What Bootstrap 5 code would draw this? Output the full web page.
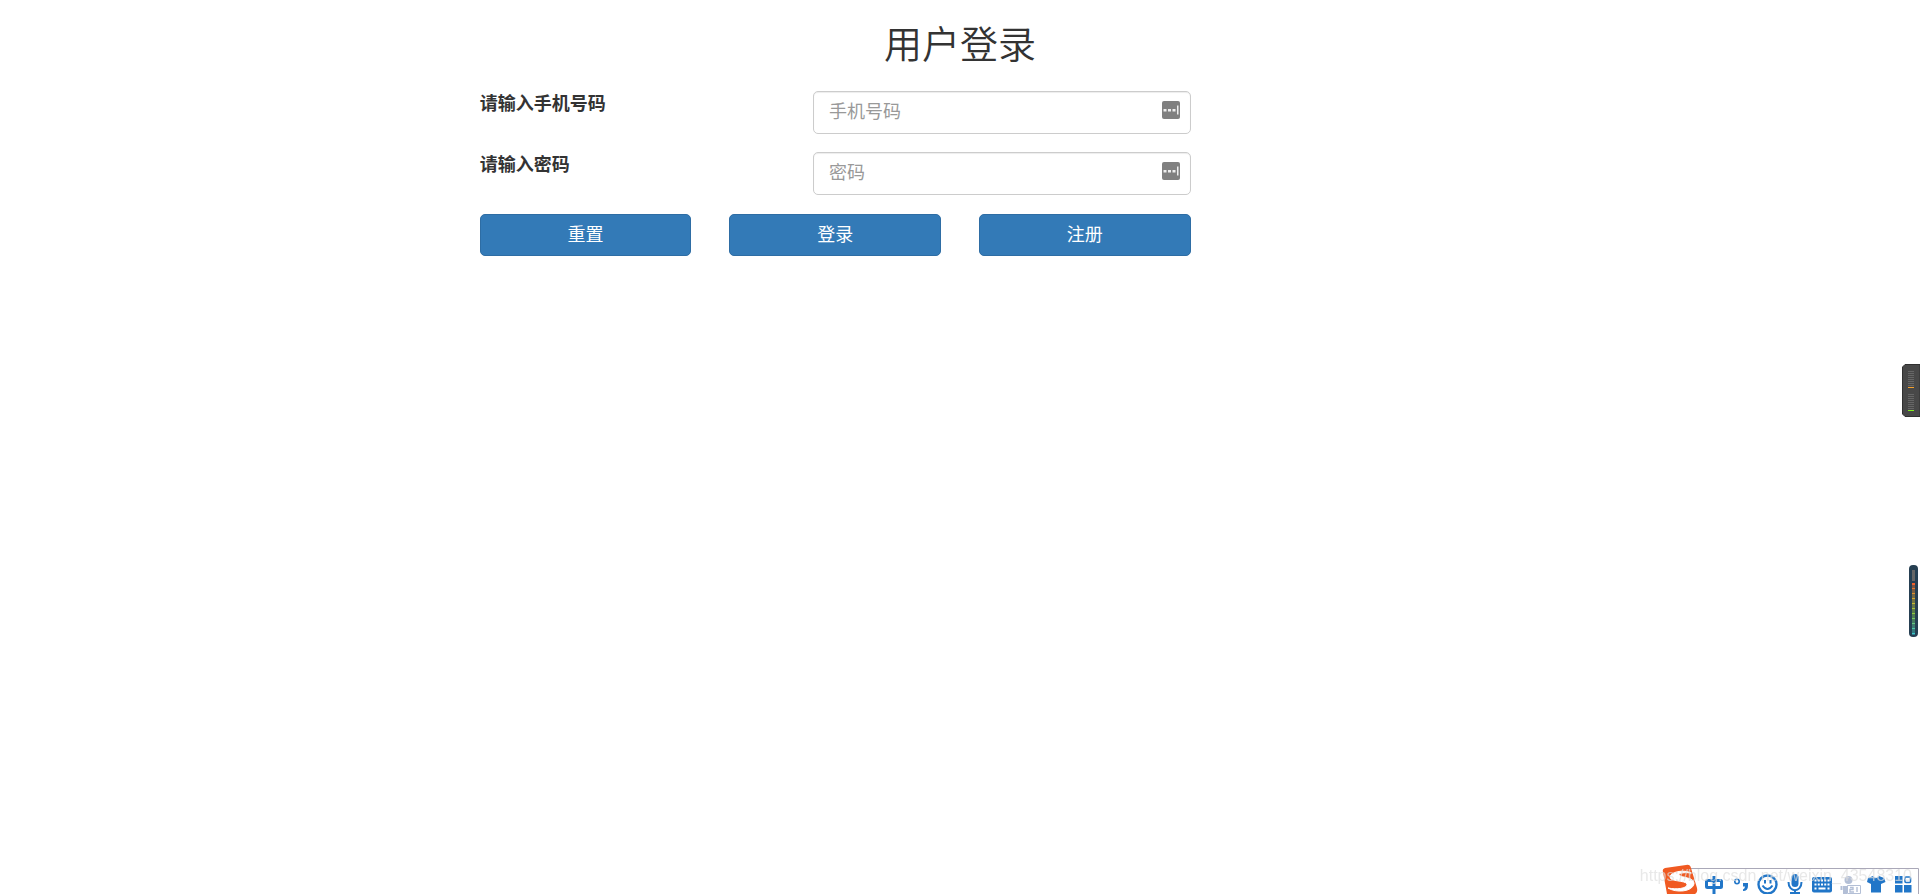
<!DOCTYPE html>
<html lang="zh-CN">
<head>
<meta charset="utf-8">
<meta name="viewport" content="width=device-width, initial-scale=1">
<title>用户登录</title>
<link href="https://cdn.jsdelivr.net/npm/bootstrap@5.3.0/dist/css/bootstrap.min.css" rel="stylesheet">
<style>
  body { font-family: "Liberation Sans", "Noto Sans CJK SC", sans-serif; font-size: 18px; line-height: 26px; color: #333; background: #fff; }
  .page-title { font-size: 38px; line-height: 42px; font-weight: 350; font-family: "Noto Sans CJK SC", sans-serif; margin: 21px 0 28px; }
  .login-form { width: 39%; margin-left: 24%; }
  .login-form .row { --bs-gutter-x: 38px; margin: 0 0 18px; }
  .label-col { width: 44.5%; }
  .field-col { width: 55.5%; }
  .form-control { height: 43px; padding: 8px 40px 8px 15px; font-size: 18px; line-height: 25px; border-color: #ccc; border-radius: 5px; box-shadow: inset 0 1px 1px rgba(0,0,0,.075); }
  .form-control::placeholder { color: #999; }
  .key-icon { top: 10px; right: 30px; }
  .login-form .button-row { padding-top: 1px; }
  .btn-primary { --bs-btn-bg: #337ab7; --bs-btn-border-color: #2e6da4; height: 42px; padding: 7px 15px; font-size: 18px; line-height: 25px; border-radius: 5px; }
  .meter-panel { top: 364px; width: 18px; height: 53px; }
  .level-bar { top: 565px; right: 2px; }
  .watermark { right: 8px; bottom: 6px; font-family: "Liberation Sans", sans-serif; font-size: 16px; line-height: 24px; color: rgba(222,222,222,.7); pointer-events: none; }
</style>
</head>
<body>
<main>
  <h1 class="page-title text-center">用户登录</h1>
  <form class="login-form">
    <div class="row">
      <div class="label-col"><label class="fw-bold" for="phone">请输入手机号码</label></div>
      <div class="field-col position-relative">
        <input class="form-control" id="phone" type="tel" placeholder="手机号码">
        <svg class="key-icon position-absolute" width="18" height="18" viewBox="0 0 18 18" aria-hidden="true"><rect width="18" height="18" rx="2" fill="#808080"/><path d="M1.500 8h3v2.500h-3zM6 8h3v2.500H6zM10.500 8h3v2.500h-3zM15 4.500h1.500v9H15z" fill="#eee"/></svg>
      </div>
    </div>
    <div class="row">
      <div class="label-col"><label class="fw-bold" for="password">请输入密码</label></div>
      <div class="field-col position-relative">
        <input class="form-control" id="password" type="password" placeholder="密码">
        <svg class="key-icon position-absolute" width="18" height="18" viewBox="0 0 18 18" aria-hidden="true"><rect width="18" height="18" rx="2" fill="#808080"/><path d="M1.500 8h3v2.500h-3zM6 8h3v2.500H6zM10.500 8h3v2.500h-3zM15 4.500h1.500v9H15z" fill="#eee"/></svg>
      </div>
    </div>
    <div class="row button-row">
      <div class="col-4"><button class="btn btn-primary w-100" type="reset">重置</button></div>
      <div class="col-4"><button class="btn btn-primary w-100" type="submit">登录</button></div>
      <div class="col-4"><button class="btn btn-primary w-100" type="button">注册</button></div>
    </div>
  </form>
</main>

<!-- desktop meters docked to the right edge -->
<svg class="meter-panel position-fixed end-0" viewBox="0 0 18 53" aria-hidden="true">
  <path d="M18 .5H3L.5 3v47L3 52.500H18z" fill="#484848" stroke="#303030"/>
  <path d="M6 7.500h6M6 9.500h6M6 11.500h6M6 13.500h6M6 15.500h6M6 17.500h6M6 19.500h6M6 21.500h6M6 30.500h6M6 32.500h6M6 34.500h6M6 36.500h6M6 38.500h6M6 40.500h6M6 42.500h6M6 44.500h6" stroke="#666"/>
  <path d="M6 23.500h6" stroke="#f5a12d"/><path d="M6 46.500h6" stroke="#83f01d"/>
</svg>
<svg class="level-bar position-fixed" width="9" height="72" viewBox="0 0 9 72" aria-hidden="true">
  <defs><linearGradient id="level" x1="0" y1="18" x2="0" y2="70" gradientUnits="userSpaceOnUse"><stop stop-color="#f45b2b"/><stop offset=".35" stop-color="#d5b62c"/><stop offset=".6" stop-color="#8ccc40"/><stop offset="1" stop-color="#35c6d4"/></linearGradient></defs>
  <rect width="9" height="72" rx="4" fill="#263f52"/>
  <rect x="3" y="5" width="3" height="11" fill="#666"/>
  <path d="M3 18h3v52H3z" fill="url(#level)" opacity=".45"/>
  <path d="M3 18h3v2H3zM3 23h3v1H3zM3 28h3v1H3zM3 33h3v1H3zM3 38h3v1H3zM3 43h3v1H3zM3 48h3v1H3zM3 53h3v1H3zM3 58h3v1H3zM3 63h3v1H3zM3 68h3v1H3z" fill="url(#level)"/>
</svg>

<!-- input method toolbar -->
<svg class="position-fixed bottom-0 end-0" width="260" height="30" viewBox="1660 864 260 30" role="img" aria-label="输入法工具栏">
  <path d="M1685 868.500H1918.500V894" fill="#fff" stroke="#aaa8b8"/>
  <path d="M1665 868L1686 865q4-1 5 3l6 20q1 4-2 6H1667l-4-22q-1-3 2-4z" fill="#f05a22"/>
  <path d="M1691 873c-7-4-21-1-21 4s15 3 17 7c1 4-9 6-19 4 8 5 24 4 26-4 1-7-13-6-15-9-1-2 7-3 12-2z" fill="#fff" stroke="#fff"/>
  <g fill="none" stroke="#2176c8" stroke-width="3">
    <rect x="1706.500" y="880.500" width="15" height="7" rx="1"/><path d="M1714 876v18"/>
    <circle cx="1737" cy="881.500" r="2.200" stroke-width="1.600"/>
    <circle cx="1767.500" cy="884.500" r="9" stroke-width="2.400"/>
    <path d="M1762.500 885.500q5 7 10 0" stroke-width="2"/>
    <path d="M1765 880v3.500M1770.500 880v3.500" stroke-width="2"/>
    <path d="M1788.500 882c0 11 13 11 13 0M1795 890v4M1790 893h10" stroke-width="2"/>
  </g>
  <path d="M1743 883h5v3q0 5-5 5v-1.500q2-1 2-3h-2z" fill="#2176c8"/>
  <rect x="1791.500" y="874" width="7" height="13" rx="3.500" fill="#2176c8"/>
  <rect x="1812" y="877" width="20" height="15.500" rx="2" fill="#2176c8"/>
  <path d="M1814.500 880.500h15M1814.500 884.500h15" stroke="#fff" stroke-width="2" stroke-dasharray="2 1.250"/>
  <path d="M1814.500 888.500h2m2 0h7m2 0h2" stroke="#fff" stroke-width="2"/>
  <g fill="#b3bfd6"><circle cx="1848.500" cy="880" r="4"/><path d="M1843 886h9v2h-5v6h-4z"/><path d="M1840.500 886h2v4h-2z"/></g>
  <path d="M1847.500 885.500h13v8h-13z" fill="#fff" stroke="#b3bfd6"/>
  <path d="M1850 887.500h3v2h-3v2.500h4M1857 887v5" fill="none" stroke="#b3bfd6" stroke-width="1.400"/>
  <path d="M1868 878l5-2q3 4 6 0l5 2 1.500 4-4.500 2v8.500h-10V884l-4-2z" fill="#2176c8"/>
  <path d="M1895 876h7.500v7.500h-7.500zM1904 885h7.500v7.500h-7.500zM1895 885h7.500v7.500h-7.500z" fill="#2176c8"/><rect x="1905" y="877" width="5.500" height="5.500" rx="1" fill="none" stroke="#2176c8" stroke-width="1.600"/>
</svg>
<div class="watermark position-fixed">https://blog.csdn.net/weixin_43548310</div>
<script src="https://cdn.jsdelivr.net/npm/bootstrap@5.3.0/dist/js/bootstrap.bundle.min.js"></script>
</body>
</html>
